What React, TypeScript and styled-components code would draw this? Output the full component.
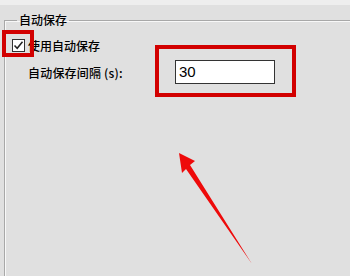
import React from "react";
import styled, { createGlobalStyle } from "styled-components";

const Global = createGlobalStyle`
  html, body { margin: 0; padding: 0; }
  body {
    background: #e0e0e0;
    font-family: "Noto Sans CJK SC", "Noto Sans", sans-serif;
    font-size: 12px;
    font-weight: 500;
    color: #000;
    width: 350px;
    height: 276px;
    overflow: hidden;
  }
`;

const Page = styled.div`
  position: relative;
  width: 350px;
  height: 276px;
  overflow: hidden;
  background: #e0e0e0;
`;

const TopStrip = styled.div`
  height: 5px;
  background: #eeeeee;
`;

const Group = styled.fieldset`
  margin: 7px -20px 0 4px;
  padding: 7px 0 0 7px;
  height: 300px;
  border: none;
  border-top: 1px solid #a8a8a8;
  border-left: 1px solid #a8a8a8;
  box-shadow: inset 1px 1px 0 #f8f8f8;
  min-width: 0;
`;

const Legend = styled.legend`
  margin-left: 5px;
  padding: 0 2px;
  font-size: 12px;
  line-height: 16px;
`;

const CheckRow = styled.label`
  display: flex;
  align-items: center;
  gap: 3px;
  height: 14px;
  margin-top: 3px;
`;

const Box = styled.span`
  display: flex;
  align-items: center;
  justify-content: center;
  width: 11px;
  height: 11px;
  border: 1px solid #333;
  background: #fff;
`;

const FieldRow = styled.div`
  display: flex;
  align-items: center;
  margin-top: 8px;
  padding-left: 16px;
`;

const FieldLabel = styled.span`
  width: 147px;
  font-size: 12px;
  letter-spacing: 0.2px;
`;

const Input = styled.div`
  box-sizing: border-box;
  width: 100px;
  height: 24px;
  border: 1px solid #333;
  background: #fff;
  padding: 0 3px;
  font-family: "Liberation Sans", Arial, sans-serif;
  font-weight: 400;
  font-size: 15px;
  line-height: 22px;
`;

const Highlight = styled.div<{ $l: number; $t: number; $w: number; $h: number }>`
  position: absolute;
  left: ${(p) => p.$l}px;
  top: ${(p) => p.$t}px;
  width: ${(p) => p.$w}px;
  height: ${(p) => p.$h}px;
  box-sizing: border-box;
  border: 4px solid #d20000;
  pointer-events: none;
`;

const ArrowSvg = styled.svg`
  position: absolute;
  left: 0;
  top: 0;
  pointer-events: none;
`;

export default function App() {
  return (
    <>
      <Global />
      <Page>
        <TopStrip />
        <Group>
          <Legend>自动保存</Legend>
          <CheckRow>
            <Box>
              <svg width="11" height="11" viewBox="0 0 11 11">
                <path d="M1.5 5.5 L4.2 8.3 L9.5 1.8" fill="none" stroke="#222" strokeWidth="1.5" />
              </svg>
            </Box>
            <span>使用自动保存</span>
          </CheckRow>
          <FieldRow>
            <FieldLabel>自动保存间隔 (s):</FieldLabel>
            <Input>30</Input>
          </FieldRow>
        </Group>
        <Highlight $l={2} $t={30} $w={32} $h={27} />
        <Highlight $l={155} $t={45} $w={141} $h={52} />
        <ArrowSvg width="350" height="276" viewBox="0 0 350 276">
          <polygon
            points="179,153 195,161 190,165 252,264 186,169 182,173"
            fill="#ee0a0a"
          />
        </ArrowSvg>
      </Page>
    </>
  );
}
